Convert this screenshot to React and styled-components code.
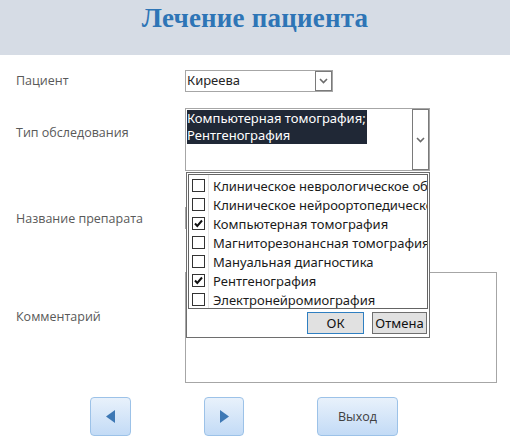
import React from "react";
import styled, { createGlobalStyle } from "styled-components";

const GlobalStyle = createGlobalStyle`
  html, body {
    margin: 0;
    padding: 0;
    background: #ffffff;
  }
`;

const examTypes = [
  { name: "Клиническое неврологическое обследование", checked: false },
  { name: "Клиническое нейроортопедическое обследование", checked: false },
  { name: "Компьютерная томография", checked: true },
  { name: "Магниторезонансная томография", checked: false },
  { name: "Мануальная диагностика", checked: false },
  { name: "Рентгенография", checked: true },
  { name: "Электронейромиография", checked: false }
];

const Chevron = () => (
  <svg width="9" height="6" viewBox="0 0 9 6">
    <path d="M1 1 L4.5 4.5 L8 1" fill="none" stroke="#6b6b6b" strokeWidth="1.6" />
  </svg>
);

const Tick = () => (
  <svg width="11" height="11" viewBox="0 0 11 11">
    <path d="M2 5.5 L4.3 8 L9 2.5" fill="none" stroke="#111" strokeWidth="2" />
  </svg>
);

const Triangle = ({ dir }) => (
  <svg width="9" height="13" viewBox="0 0 9 13">
    {dir === "left" ? (
      <path d="M9 0 L9 13 L0 6.5 Z" fill="#3d78b5" />
    ) : (
      <path d="M0 0 L0 13 L9 6.5 Z" fill="#3d78b5" />
    )}
  </svg>
);

const App = () => {
  return (
    <>
      <GlobalStyle />
      <Page>
        <Header>
          <Title>Лечение пациента</Title>
        </Header>

        <Row gap={15}>
          <Label offset={2}>Пациент</Label>
          <Combo width={148} height={22}>
            <ComboText>Киреева</ComboText>
            <DropButton>
              <Chevron />
            </DropButton>
          </Combo>
        </Row>

        <Row gap={16}>
          <Label offset={16}>Тип обследования</Label>
          <FieldHolder>
            <Combo width={245} height={63}>
              <ComboText>
                <Selected>
                  Компьютерная томография;
                  <br />
                  Рентгенография
                </Selected>
              </ComboText>
              <DropButton>
                <Chevron />
              </DropButton>
            </Combo>

            <Popup>
              <CheckList>
                {examTypes.map(item => (
                  <CheckRow key={item.name}>
                    <CheckCell>
                      <Box>{item.checked && <Tick />}</Box>
                    </CheckCell>
                    <ItemText>{item.name}</ItemText>
                  </CheckRow>
                ))}
              </CheckList>
              <PopupButtons>
                <DialogButton primary width={57}>
                  ОК
                </DialogButton>
                <DialogButton width={55}>Отмена</DialogButton>
              </PopupButtons>
            </Popup>
          </FieldHolder>
        </Row>

        <Row gap={36}>
          <Label offset={3}>Название препарата</Label>
          <Combo width={245} height={22}>
            <ComboText />
            <DropButton>
              <Chevron />
            </DropButton>
          </Combo>
        </Row>

        <Row gap={43}>
          <Label offset={36}>Комментарий</Label>
          <TextArea />
        </Row>

        <ButtonBar>
          <NavButton width={41} spaceAfter={73}>
            <Triangle dir="left" />
          </NavButton>
          <NavButton width={40} spaceAfter={73}>
            <Triangle dir="right" />
          </NavButton>
          <NavButton width={81}>Выход</NavButton>
        </ButtonBar>
      </Page>
    </>
  );
};

const Page = styled.div`
  width: 510px;
  height: 445px;
  overflow: hidden;
  background: #ffffff;
`;

const Header = styled.div`
  height: 55px;
  background: #d6dce5;
  display: flex;
  justify-content: center;
`;

const Title = styled.h1`
  margin: 0;
  padding-top: 3px;
  font-family: "Liberation Serif", "Times New Roman", serif;
  font-weight: bold;
  font-size: 27px;
  line-height: 30px;
  color: #2e75b6;
  letter-spacing: 0.2px;
`;

const Row = styled.div`
  display: grid;
  grid-template-columns: 185px auto;
  margin-top: ${props => props.gap}px;
  align-items: start;
`;

const Label = styled.div`
  padding-left: 16px;
  margin-top: ${props => props.offset}px;
  font-family: "Open Sans", "Liberation Sans", sans-serif;
  font-size: 12.5px;
  line-height: 17px;
  color: #595959;
`;

const FieldHolder = styled.div`
  position: relative;
`;

const Combo = styled.div`
  box-sizing: border-box;
  width: ${props => props.width}px;
  height: ${props => props.height}px;
  border: 1px solid #a6a6a6;
  display: flex;
  background: #ffffff;
`;

const ComboText = styled.div`
  flex: 1;
  padding: 1px 0 0 1px;
  font-family: "Noto Sans", "Open Sans", sans-serif;
  font-size: 13px;
  line-height: 16px;
  color: #262626;
  overflow: hidden;
`;

const Selected = styled.span`
  display: inline-block;
  background: #202836;
  color: #ffffff;
  line-height: 17px;
  padding-right: 1px;
`;

const DropButton = styled.div`
  box-sizing: border-box;
  width: 17px;
  border: 1px solid #7a7a7a;
  display: flex;
  align-items: center;
  justify-content: center;
  background: #ffffff;
`;

const Popup = styled.div`
  position: absolute;
  top: 64px;
  left: 1px;
  box-sizing: border-box;
  width: 244px;
  height: 166px;
  border: 1px solid #6e6e6e;
  background: #ffffff;
  padding: 1px;
  z-index: 2;
`;

const CheckList = styled.div`
  box-sizing: border-box;
  height: 135px;
  border: 1px solid #646464;
  padding-top: 1px;
  overflow: hidden;
  background: linear-gradient(
    to right,
    transparent 19px,
    #e3e3e3 19px,
    #e3e3e3 20px,
    transparent 20px
  );
`;

const CheckRow = styled.div`
  display: flex;
  align-items: center;
  height: 19px;
`;

const CheckCell = styled.div`
  width: 20px;
  flex: none;
  display: flex;
  justify-content: center;
`;

const Box = styled.div`
  box-sizing: border-box;
  width: 13px;
  height: 13px;
  border: 1px solid #333333;
  display: flex;
  align-items: center;
  justify-content: center;
  margin-left: -2px;
`;

const ItemText = styled.div`
  padding-left: 4px;
  font-family: "Noto Sans", "Open Sans", sans-serif;
  font-size: 13px;
  line-height: 16px;
  color: #1a1a1a;
  white-space: nowrap;
  overflow: hidden;
`;

const PopupButtons = styled.div`
  display: flex;
  justify-content: flex-end;
  gap: 8px;
  padding: 3px 1px 0 0;
`;

const DialogButton = styled.div`
  box-sizing: border-box;
  width: ${props => props.width}px;
  height: 22px;
  background: #e1e1e1;
  border: 1px solid ${props => (props.primary ? "#2f7fc1" : "#6f6f6f")};
  display: flex;
  align-items: center;
  justify-content: center;
  font-family: "Noto Sans", "Open Sans", sans-serif;
  font-size: 13px;
  color: #111111;
`;

const TextArea = styled.div`
  box-sizing: border-box;
  width: 312px;
  height: 111px;
  border: 1px solid #a6a6a6;
`;

const ButtonBar = styled.div`
  display: flex;
  margin-top: 14px;
  padding-left: 90px;
`;

const NavButton = styled.div`
  box-sizing: border-box;
  width: ${props => props.width}px;
  height: 39px;
  margin-right: ${props => props.spaceAfter || 0}px;
  border: 1px solid #9cc2e8;
  border-radius: 4px;
  background: linear-gradient(to bottom, #e8f1fb, #c3dbf6);
  display: flex;
  align-items: center;
  justify-content: center;
  font-family: "Open Sans", "Liberation Sans", sans-serif;
  font-size: 12.5px;
  color: #404040;
`;

export default App;
